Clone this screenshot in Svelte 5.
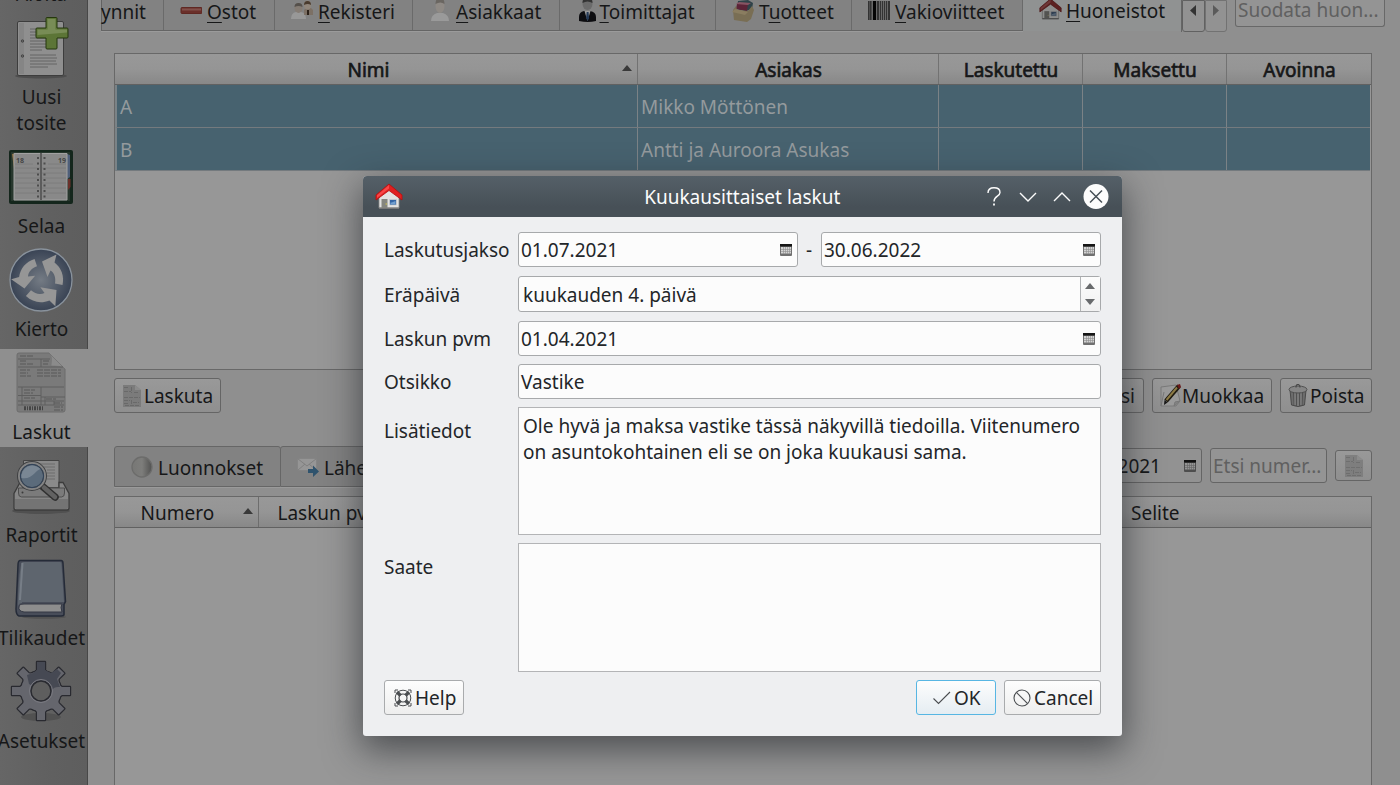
<script>
  const nav = [
    { icon: '', label: ['Aloita'] },
    { icon: 'new', label: ['Uusi', 'tosite'] },
    { icon: 'diary', label: ['Selaa'] },
    { icon: 'cycle', label: ['Kierto'] },
    { icon: 'invoice', label: ['Laskut'], active: true },
    { icon: 'report', label: ['Raportit'] },
    { icon: 'book', label: ['Tilikaudet'] },
    { icon: 'gear', label: ['Asetukset'] }
  ];
  const tabs = [
    { icon: 'minus', pre: '', key: 'O', rest: 'stot', w: 111 },
    { icon: 'people', pre: '', key: 'R', rest: 'ekisteri', w: 138 },
    { icon: 'person', pre: '', key: 'A', rest: 'siakkaat', w: 147 },
    { icon: 'suit', pre: '', key: 'T', rest: 'oimittajat', w: 156, narrow: true },
    { icon: 'box', pre: 'T', key: 'u', rest: 'otteet', w: 136 },
    { icon: 'barcode', pre: '', key: 'V', rest: 'akioviitteet', w: 171 }
  ];
  const heads = ['Nimi', 'Asiakas', 'Laskutettu', 'Maksettu', 'Avoinna'];
  const rows = [
    ['A', 'Mikko Möttönen', '', '', ''],
    ['B', 'Antti ja Auroora Asukas', '', '', '']
  ];
  const teeth = [0, 45, 90, 135, 180, 225, 270, 315];
  const bars = [[0, 1.5], [2, 1.5], [5, 3], [9, 2], [12, 1], [14, 1], [16, 1], [18, 1], [20, 3]];
</script>

{#snippet house(dim)}
  <svg class:dim width="28" height="28" viewBox="0 0 28 28">
    <path d="M4 13L14 5l10 8v12H4z" fill="#e3e3e1" stroke="#8c8c8a" stroke-width=".8" />
    <path d="M4 24.5h20v1.5H4z" fill="#777" />
    <path d="M6.5 16h6v9h-6z" fill="#85867f" /><circle cx="11.2" cy="21" r=".7" fill="#d8c94c" />
    <path d="M14.5 16.5h7V22h-7z" fill="#3465a4" stroke="#d0d0d0" stroke-width=".8" /><path d="M15.500 19.5c2 0 3-1 5-1.600v3.400h-5z" fill="#729fcf" />
    <path d="M14 1L1 12v5L14 7.500 27 17v-5z" fill="#e02020" stroke="#b80c0c" stroke-width=".8" stroke-linejoin="round" />
    <path d="M14 2L2 12.200v2.800L14 5.500z" fill="#f84848" />
  </svg>
{/snippet}

{#snippet calendar()}
  <svg class="cal" width="12" height="12" viewBox="0 0 12 12">
    <rect x="0" y="0" width="12" height="12" rx="1" fill="#707070" />
    <rect x="0" y="0" width="12" height="2.500" fill="#161616" />
    <rect x="1" y="3" width="10" height="6.500" fill="#d4d4d4" />
    <path d="M1 5.500h10M1 7.500h10M3.500 3v7M5.500 3v7M7.500 3v7M9.500 3v7" stroke="#8d8d8d" stroke-width=".6" />
  </svg>
{/snippet}

{#snippet doc()}
  <svg width="18" height="22" viewBox="0 0 18 22">
    <path d="M0 0h12l6 5v17H0z" fill="#7b7b7b" />
    <path d="M12 0v5h6z" fill="#8b8b8b" />
    <path d="M1 2.500h5M1 6.500h7M8.500 2v6M11 7.500h5M1 12.500h16M1 15.500h6M8.500 15v5M10 17.500h6M1 18.500h5M2 20.500h14" stroke="#696969" stroke-dasharray="4 1" />
  </svg>
{/snippet}

{#snippet navIcon(name)}
  <svg width="64" height="64" viewBox="0 0 64 64">
    {#if name === 'new'}
      <ellipse cx="32" cy="60" rx="26" ry="2.500" fill="#4d4d4d" />
      <rect x="8.500" y="5.500" width="46" height="54" rx="1.500" fill="#8f8f8f" stroke="#3d3d3d" />
      <path d="M10 7h5v51h-5z" fill="#858585" />
      <path d="M21 13h20M21 16h22M21 19h20M21 22h22M21 25h17M21 28h20M21 31h26M21 34h12M21 39h26M21 42h27M21 45h26M21 48h27M21 51h18" stroke="#656565" />
      <circle cx="13.500" cy="25" r="1.200" fill="#6c6c6c" stroke="#444" /><circle cx="13.500" cy="40" r="1.200" fill="#6c6c6c" stroke="#444" />
      <path d="M38 1.500h9a1 1 0 0 1 1 1V12h10a1 1 0 0 1 1 1v8a1 1 0 0 1-1 1H48v10a1 1 0 0 1-1 1h-9a1 1 0 0 1-1-1V22H28a1 1 0 0 1-1-1v-8a1 1 0 0 1 1-1h9V2.500a1 1 0 0 1 1-1z" fill="#5c7536" stroke="#25370e" />
      <path d="M38.500 3h8v10.500h11.500v3L28.500 19v-5.500h10z" fill="#8b9b6c" opacity=".6" />
    {:else if name === 'diary'}
      <rect x="0" y="5" width="64" height="54" rx="2" fill="#14261c" />
      <rect x="2" y="7" width="59" height="49" fill="#27372d" />
      <path d="M3 9l5-1v18l-3-2z" fill="#8b7145" /><path d="M58 9l3 1v22l-3 2z" fill="#4f5f79" /><path d="M59 34h2.500v8L59 45z" fill="#6b302a" />
      <path d="M5 8.500h53V55H5z" fill="#898989" stroke="#a1a1a1" />
      <path d="M6 19h18M39 19h18M6 23h51M6 28h51M6 33h51M6 38h51M6 43h51M6 48h51" stroke="#7d7d7d" />
      <path d="M32 8v47" stroke="#5c5c5c" stroke-width="2" />
      <path d="M29 12v42M35.500 12v42" stroke="#4c4c4c" stroke-width="2" stroke-dasharray="2 3.500" />
      <text x="11" y="18" text-anchor="middle" font-size="7" font-weight="700" fill="#454545">18</text>
      <text x="53" y="18" text-anchor="middle" font-size="7" font-weight="700" fill="#454545">19</text>
    {:else if name === 'cycle'}
      <circle cx="32" cy="32" r="31" fill="url(#blue)" stroke="#89929c" stroke-width="1.300" />
      <g fill="#969696">
        {#each [0, 120, 240] as a}
          <path transform="rotate({a} 32 32)" d="M33 13.500L47.500 6.500 45.500 14.500C52.500 20 55.500 28 53.500 37L46 35.500C47 30 45.500 25 41.500 22.500L38.500 29z" />
        {/each}
      </g>
    {:else if name === 'invoice'}
      <path d="M8 4q0-2 2-2h30l16 16v41q0 2-2 2H10q-2 0-2-2z" fill="#7a7a7a" stroke="#6c6c6c" />
      <path d="M40 2c4 4 2 9 2 13 5 0 10 0 14 3z" fill="#8b8b8b" stroke="#737373" stroke-width=".6" />
      <path d="M9 8h32M9 16h45M9 36h46M9 44.500h23M32 46h24M9 50h46M9 54h46M13 36v18M32 36v18M32 8v8M36 46v8M45 50v4" stroke="#5f5f5f" fill="none" />
      <path d="M11 5h13M11 10h7M11 13h13M34 10h7M34 13h5M11 19h10M11 22h8M11 25h11M28 19h24M28 22h24M28 25h24M15 39h11M15 42h9M15 47h11M37 48h10M45 52h8M45 56h9M45 59h9" stroke="#585858" stroke-dasharray="6 1" />
      <path d="M15 57.300h19" stroke="#454545" stroke-width="4" stroke-dasharray="2 1 1 1" />
    {:else if name === 'report'}
      <ellipse cx="32" cy="57" rx="29" ry="3" fill="#505050" />
      <path d="M14.500 6.500h35.500V34H14.500z" fill="#8a8a8a" stroke="#444" />
      <path d="M31 10h15M31 13h15M38 16h8M38 19h8M38 22h8M38 25h8" stroke="#6d6d6d" />
      <path d="M12 28.500h2.500M50 28.500h4l6 11v14.500q0 2-2 2H7q-2 0-2-2V39.500l6-11h3V34h36z" fill="#868686" stroke="#3c3c3c" stroke-width="1.300" />
      <path d="M6 45h53v8.500q0 1.500-2 1.500H8q-2 0-2-1.500z" fill="#747474" />
      <path d="M9.500 34v5q0 4 3 4h40q3 0 3-4v-5z" fill="#7b7b7b" stroke="#4e4e4e" />
      <circle cx="13.500" cy="38.500" r="1" fill="#3a3a3a" />
      <path d="M33 32l13 11" stroke="#303030" stroke-width="7.500" stroke-linecap="round" /><path d="M35 33.500l11 9.500" stroke="#626262" stroke-width="4.500" stroke-linecap="round" />
      <circle cx="23" cy="22" r="13" fill="#5b6b7b" stroke="#3f4042" stroke-width="4" /><circle cx="23" cy="22" r="13" fill="none" stroke="#848484" stroke-width="2" /><circle cx="23" cy="22" r="11.700" fill="none" stroke="#31445c" />
      <path d="M12.500 24a11 11 0 0 1 19-9c-5 1-8 11-19 9z" fill="#8793a0" opacity=".7" />
    {:else if name === 'book'}
      <ellipse cx="35" cy="60" rx="22" ry="1.700" fill="#525252" />
      <path d="M11 3.500h41q2 0 2 3l2.500 38-1.500 3v10q0 1.500-3 1.500H10q-3-1-3-7L9 8q0-4 2-4.500z" fill="#484d59" stroke="#252b38" stroke-width="1.500" />
      <path d="M14 5h37q1.500 0 1.500 2L55 45H13V46q-4 0-4 5 0-27 3-43 0-3 2-3z" fill="#5e656e" />
      <path d="M13.500 6L11 43" stroke="#777e87" stroke-width="2" />
      <path d="M15 47h38q-2 3 0 8H15q-6-1-5-5 0-3 5-3z" fill="#8d8d8d" stroke="#343844" />
    {:else if name === 'gear'}
      <ellipse cx="32" cy="57" rx="20" ry="4" fill="#515151" />
      <g stroke="#292a30" stroke-width="2.400" stroke-linejoin="round" fill="#65666d">
        {#each teeth as a}<path transform="rotate({a} 32 31)" d="M23 17l5-7 0-8h8l0 8 5 7z" />{/each}
        <circle cx="32" cy="31" r="20" />
      </g>
      <g fill="#65666d">
        {#each teeth as a}<path transform="rotate({a} 32 31)" d="M23 17l5-7 0-8h8l0 8 5 7z" />{/each}
        <circle cx="32" cy="31" r="20" />
      </g>
      <path d="M18 15l6-2 4-3V2h8v8l6 3 6-4 4 4-4 6 3 8c-10-1-6 7-17 5L20 24z" fill="#464953" />
      <circle cx="32" cy="31" r="10" fill="#5e5e5e" stroke="#292a30" stroke-width="1.500" />
      <circle cx="32" cy="31" r="11.500" fill="none" stroke="#7b7b82" />
    {/if}
    <defs><radialGradient id="blue"><stop offset="0" stop-color="#747b84" /><stop offset="1" stop-color="#394354" /></radialGradient></defs>
  </svg>
{/snippet}

{#snippet tabIcon(name)}
  <svg width="22" height="22" viewBox="0 0 22 22">
    {#if name === 'minus'}
      <rect x="1" y="7.500" width="21" height="6" rx="1" fill="#6a2f2a" stroke="#5f2823" /><path d="M2 8.500h19v2H2z" fill="#80504a" />
    {:else if name === 'people'}
      <path d="M0 19q0-6 5-7h5q5 1 5 7z" fill="#989898" /><ellipse cx="7.500" cy="8" rx="4" ry="5" fill="#857c74" /><path d="M3.500 7q0-4 4-4t4 4q-4-2-8 0z" fill="#55504b" />
      <path d="M13 15v-5l2-2h5l2 2v5z" fill="#7c7065" /><ellipse cx="16.500" cy="5" rx="3.500" ry="4.500" fill="#91867b" /><path d="M13 5q0-4 3.500-4T20 5q-3-2-7 0z" fill="#4a3b2e" /><path d="M16 10h2v5h-2z" fill="#2b2119" />
    {:else if name === 'person'}
      <path d="M2 21q0-6 6-8h6q6 2 6 8z" fill="#9a9a9a" /><ellipse cx="11" cy="6" rx="4.500" ry="7" fill="#8f8a85" /><path d="M6.500 4q0-6 4.500-6t4.500 6q-4-3-9 0z" fill="#6a6661" />
    {:else if name === 'suit'}
      <path d="M3 21v-4q0-5 5-6h6q6 1 6 6v4q-8 2-17 0z" fill="#0d0d10" /><path d="M8.500 11h6l-3 10z" fill="#9b9b9b" /><path d="M10.700 12h1.800l.6 6-1.500 3-1.500-3z" fill="#243956" /><ellipse cx="11.500" cy="4" rx="5" ry="6" fill="#6b6b6b" /><path d="M6.500 3q0-6 5-6t5 6q-5-3-10 0z" fill="#333" />
    {:else if name === 'box'}
      <path d="M6 1l10-1 5 3-1 6-6 2-9-2z" fill="#2e4248" /><path d="M5 4l11-1-1 8-11-2z" fill="#5c2337" /><path d="M4 4l3-2 12 1-3 2z" fill="#875463" />
      <path d="M1 10l3-4 1 4 11 1 4-5 2 4-3 9-4 3-13-2z" fill="#796e54" /><path d="M0 12l3-3 13 3-3 3z" fill="#8a7d60" />
    {:else if name === 'barcode'}
      <path d="M0 1h23v19H0z" fill="#686868" />
      {#each bars as [x, w]}<rect {x} y="1" width={w} height="19" fill={x === 5 ? '#050505' : '#333'} />{/each}
    {/if}
  </svg>
{/snippet}

<div class="app">
  <nav class="side">
    {#each nav as n}
      <div class="item" class:active={n.active}>
        {@render navIcon(n.icon)}
        {#each n.label as l}<span>{l}</span>{/each}
      </div>
    {/each}
  </nav>

  <main>
    <div class="top">
      <div class="tabs">
        <div class="tab cut"><span>ynnit</span></div>
        {#each tabs as t}
          <div class="tab" style:width="{t.w}px">
            <i class:narrow={t.narrow}>{@render tabIcon(t.icon)}</i><span>{t.pre}<u>{t.key}</u>{t.rest}</span>
          </div>
        {/each}
      </div>
      <div class="tab current"><i>{@render house(true)}</i><span><u>H</u>uoneistot</span></div>
      <div class="scroll">
        <b><svg width="8" height="12" viewBox="0 0 8 12"><path d="M7 0v11L1 5.500z" fill="#333" /></svg></b>
        <b><svg width="8" height="12" viewBox="0 0 8 12"><path d="M1 0v11l6-5.500z" fill="#5a5a5a" /></svg></b>
      </div>
      <div class="filter">Suodata huon...</div>
    </div>

    <section class="table upper">
      <div class="grid head">
        {#each heads as h, i}<div><span>{h}</span>{#if i === 0}<em></em>{/if}</div>{/each}
      </div>
      {#each rows as r}
        <div class="grid row">{#each r as c}<div>{c}</div>{/each}</div>
      {/each}
    </section>

    <div class="actions">
      <div class="btn bill">{@render doc()}Laskuta</div>
      <div class="fill"></div>
      <div class="btn add">Uusi</div>
      <div class="btn edit">
        <svg width="22" height="23" viewBox="0 0 22 23"><path d="M1 3l15-2 4 16-4 5H1z" fill="#9a9a9a" stroke="#7a7a7a" /><path d="M1 22L4 8M14 22l6-5-5 1z" stroke="#777" fill="#858585" /><path d="M19 2L6 17" stroke="#1e1a10" stroke-width="4.500" /><path d="M17 3.500L6.500 16" stroke="#8c7a45" stroke-width="2" /><path d="M17 1l3-1 1 3-2 2z" fill="#6a1818" /><path d="M4.500 16l3 2.500L4 21z" fill="#171717" /></svg>Muokkaa
      </div>
      <div class="btn del">
        <svg width="20" height="23" viewBox="0 0 20 23"><path d="M2 6h16l-1.500 15q-6.500 3-13 0z" fill="#6c6c6c" stroke="#4a4a4a" /><path d="M5.500 8l.6 13M8.500 8v14M11.500 8v14M14.500 8L14 21" stroke="#505050" /><path d="M7 8v13M10 8v14M13 8v13" stroke="#858585" /><ellipse cx="10" cy="5.500" rx="9" ry="3.500" fill="#858585" stroke="#505050" /><path d="M8 3.500q0-3 2-3t2 3" fill="none" stroke="#484848" stroke-width="1.200" /></svg>Poista
      </div>
    </div>

    <div class="mid">
      <div class="tab2 drafts"><svg width="22" height="22" viewBox="0 0 22 22"><defs><linearGradient id="ball"><stop offset="0" stop-color="#777775" /><stop offset=".5" stop-color="#7d7d7b" /><stop offset="1" stop-color="#515150" /></linearGradient></defs><circle cx="11" cy="11" r="10" fill="url(#ball)" stroke="#6c6c6b" stroke-width="1.300" /></svg>Luonnokset</div>
      <div class="tab2 sent"><svg width="22" height="22" viewBox="0 0 22 22"><path d="M.5 2.500h19v12H.5z" fill="#969696" stroke="#858585" /><path d="M.5 2.500L10 10l9.500-7.500M.5 14.500L8 8M19.500 14.500L12 8" fill="none" stroke="#7f7f7f" /><path d="M11 13h5V9.500l6 6-6 5.500v-4h-5z" fill="#2f536d" /></svg>Lähetettävät</div>
      <div class="fill"></div>
      <div class="btn date">31.12.2021{@render calendar()}</div>
      <div class="btn search">Etsi numer...</div>
      <div class="btn mini">{@render doc()}</div>
    </div>

    <section class="table lower">
      <div class="head low"><div class="num"><span>Numero</span><em></em></div><div class="pvm">Laskun pvm</div><div class="sel">Selite</div></div>
    </section>
  </main>

  <div class="dialog">
    <header>
      {@render house(false)}
      <h1>Kuukausittaiset laskut</h1>
      <svg width="124" height="26" viewBox="0 0 124 26" fill="none" stroke="#fcfcfc" stroke-width="1.400">
        <path d="M3 9q0-5.200 6-5.200T15 8.500c0 4-6 3.500-6 9" /><path d="M9 19.500v2" stroke-width="1.800" />
        <path d="M35 9l8 8 8-8M69 17l8-8 8 8" />
        <circle cx="111" cy="12.500" r="12.500" fill="#fcfcfc" stroke="none" /><path d="M105 6.500l12 12M117 6.500l-12 12" stroke="#475057" stroke-width="1.500" />
      </svg>
    </header>
    <div class="form">
      <label for="d1">Laskutusjakso</label>
      <div class="pair"><div class="field" id="d1">01.07.2021{@render calendar()}</div><span>-</span><div class="field">30.06.2022{@render calendar()}</div></div>
      <label for="d2">Eräpäivä</label>
      <div class="field spin" id="d2">kuukauden 4. päivä<div class="arrows"><em></em><em class="down"></em></div></div>
      <label for="d3">Laskun pvm</label>
      <div class="field" id="d3">01.04.2021{@render calendar()}</div>
      <label for="d4">Otsikko</label>
      <div class="field" id="d4">Vastike</div>
      <label for="d5" class="tall">Lisätiedot</label>
      <div class="area" id="d5">Ole hyvä ja maksa vastike tässä näkyvillä tiedoilla. Viitenumero<br />on asuntokohtainen eli se on joka kuukausi sama.</div>
      <label for="d6" class="tall">Saate</label>
      <div class="area last" id="d6"></div>
    </div>
    <footer>
      <div class="push help"><svg width="18" height="18" viewBox="0 0 18 18" fill="none" stroke="#4a4d50"><circle cx="9" cy="9" r="7.800" /><circle cx="9" cy="9" r="4" stroke-width="1.200" /><path d="M3 3l3.500 3.500M11.500 11.500L15 15M15 3l-3.500 3.500M6.500 11.500L3 15" stroke-width="3.300" /><path d="M1 4V1h3M14 1h3v3M17 14v3h-3M4 17H1v-3" /></svg>Help</div>
      <div class="fill"></div>
      <div class="push ok"><svg width="18" height="18" viewBox="0 0 18 18" fill="none" stroke="#4a4d50" stroke-width="1.100"><path d="M.5 9.500l5 5L17 3" /></svg>OK</div>
      <div class="push cancel"><svg width="18" height="18" viewBox="0 0 18 18" fill="none" stroke="#4a4d50" stroke-width="1.100"><circle cx="9" cy="9" r="8" /><path d="M3.400 3.400l11.200 11.200" /></svg>Cancel</div>
    </footer>
  </div>
</div>

<style>
  :global(body) { overflow: hidden; }
  * { box-sizing: border-box; }
  .app { position: relative; display: flex; width: 1400px; height: 785px; overflow: hidden; background: #8f8f8f; font: 19px/26px 'Noto Sans', sans-serif; color: #161718; }
  svg { display: block; flex: none; }
  .fill { flex: 1; }
  .side { width: 88px; flex: none; display: flex; flex-direction: column; gap: 5px; margin-top: -89px; background: linear-gradient(90deg, #666, #606060 60%, #5e5e5e); border-right: 1px solid #474747; }
  .item { width: 88px; padding: 2px 0 6px; height: 98px; flex: none; display: flex; flex-direction: column; align-items: center; margin-right: -1px; }
  .item svg { margin-right: 6px; }
  .item span { margin: 4px 5px 0 0; white-space: nowrap; }
  .item span + span { margin-top: 0; }
  .item:nth-child(2) { height: 124px; }
  .item.active { background: #8f8f8f; }
  main { flex: 1; min-width: 0; display: flex; flex-direction: column; }
  .top { display: flex; height: 53px; padding-left: 13px; flex: none; }
  .tabs { display: flex; height: 31px; background: #828282; border-bottom: 1px solid #656565; box-shadow: 0 1px #9b9b9b; }
  .tab { display: flex; padding: 0 0 0 16px; border-right: 1px solid #6a6a6a; white-space: nowrap; }
  .tab span { margin: -1px 0 0 5px; }
  .tab i { width: 22px; height: 22px; flex: none; }
  .tab i.narrow { width: 18.500px; }
  u { text-decoration: underline 1px; text-underline-offset: 3px; text-decoration-skip-ink: none; }
  .cut { width: 63px; padding: 0; border-left: 1px solid #626262; }
  .tab.cut span { margin-left: -1px; }
  .current { width: 158px; border-right: 0; background: #909292; height: 31px; }
  .current span { margin-top: -2px; }
  .current i :global(svg) { width: 23px; height: 23px; margin-top: -2px; }
  .dim { filter: saturate(.5) brightness(.62); }
  .scroll { display: flex; height: 32px; border-left: 1px solid #666; }
  .scroll b { width: 22px; border: 1px solid #727272; border-radius: 0 0 3px 3px; display: flex; justify-content: center; padding-top: 4px; background: #929292; }
  .scroll b:first-child { border-color: #616161; width: 23px; }
  .scroll b svg { margin-left: -1px; }
  .filter { width: 150px; height: 27px; margin-left: 8px; border: 1px solid #686868; border-top: 0; border-radius: 0 0 3px 3px; padding-left: 2px; line-height: 20px; color: #606060; background: #949494; }
  .table { margin: 0 28px 0 26px; border: 1px solid #686868; background: #979797; flex: none; }
  .upper { height: 317px; }
  .grid { display: grid; grid-template-columns: 523px 301px 144px 144px 1fr; }
  .head { height: 31px; border-bottom: 1px solid #616161; background: linear-gradient(#989898, #959595 50%, #888); }
  .head.grid > div { position: relative; display: flex; justify-content: center; align-items: center; border-right: 1px solid #727272; padding: 1px 15px 0 0; -webkit-text-stroke: .65px #161718; }
  .head.grid > div + div { padding: 1px 0 0 1px; }
  .head.grid > div:last-child { border: 0; }
  .head em { position: absolute; right: 5px; top: 11px; border: 5.500px solid transparent; border-top: 0; border-bottom: 6px solid #393939; }
  .row { grid-template-columns: 521px 301px 144px 144px 1fr; height: 43px; border-bottom: 1px solid #747a7e; background: #47626f; border-left: 2px solid #7b8387; margin-right: 1px; color: #949a9d; }
  .row div { padding: 9px 3px 0; border-right: 1px solid #7b8286; white-space: nowrap; }
  .row div:last-child { border-right: 0; }
  .actions { display: flex; gap: 8px; margin: 8px 28px 0 26px; height: 35px; flex: none; }
  .btn { border: 1px solid #656565; border-radius: 3px; display: flex; align-items: center; height: 35px; background: linear-gradient(#999, #8f8f8f); white-space: nowrap; }
  .bill { width: 107px; padding-left: 8px; gap: 3px; }
  .add { width: 80px; justify-content: flex-end; padding-right: 8px; }
  .edit { width: 120px; padding-left: 7px; }
  .del { width: 92px; padding-left: 7px; gap: 2px; }
  .mid { display: flex; gap: 8px; margin: 33px 28px 0 26px; height: 50px; flex: none; }
  .tab2 { display: flex; gap: 5px; padding: 2px 0 0 16px; align-items: center; height: 41px; background: #828282; border: 1px solid #666; border-radius: 3px 3px 0 0; box-shadow: 0 1px #9a9a9a; white-space: nowrap; }
  .tab2 svg { margin-top: -2px; }
  .drafts { width: 167px; }
  .sent { width: 180px; margin-left: -9px; }
  .date { width: 140px; margin-top: 2px; justify-content: flex-end; gap: 23px; padding-right: 5px; background: #929292; }
  .date :global(.cal) { filter: brightness(.7); }
  .search { width: 117px; margin-top: 2px; padding-left: 2px; color: #606060; background: #949494; }
  .mini { width: 37px; height: 31px; margin-top: 4px; justify-content: center; }
  .mini :global(svg) { opacity: .85; }
  .lower { height: 300px; }
  .low { display: flex; height: 31px; line-height: 32px; }
  .num { position: relative; width: 144px; border-right: 1px solid #6d6d6d; padding-left: 25.500px; }
  .pvm { width: 853px; padding-left: 18.500px; }
  .sel { padding-left: 19px; }

  .dialog { position: absolute; left: 363px; top: 176px; width: 759px; height: 560px; border-radius: 4px 4px 3px 3px; background: #eeeff1; box-shadow: 0 12px 36px 2px rgba(30, 34, 38, .62); display: flex; flex-direction: column; color: #232629; }
  header { display: flex; align-items: center; height: 41px; padding: 0 13px 0 12px; border-radius: 4px 4px 0 0; background: linear-gradient(#556068, #475057 75%); color: #fcfcfc; }
  h1 { flex: 1; margin: 0 0 0 96.500px; font: inherit; text-align: center; }
  .form { display: grid; grid-template-columns: 134px 583px; grid-template-rows: 44px 45px 43px 43px 136px 129px; align-items: start; padding: 15px 0 0 21px; }
  label { line-height: 36px; }
  label[for='d2'] { line-height: 38px; }
  label.tall { line-height: 26px; padding-top: 11px; }
  .pair { display: grid; grid-template-columns: 280px 23px 280px; text-align: center; align-items: center; }
  .pair span { margin-left: -1px; }
  .field { display: flex; align-items: center; justify-content: space-between; height: 35px; border: 1px solid #a7a9ab; border-radius: 3px; background: #fcfcfc; padding: 0 5px 0 2px; }
  .field.spin { height: 36px; padding: 0 0 0 4px; line-height: 28px; align-items: stretch; line-height: 36px; }
  .arrows { width: 20px; border-left: 1px solid #b1b3b5; display: flex; flex-direction: column; align-items: center; justify-content: center; gap: 10px; background: linear-gradient(#fcfcfc, #f1f1f1); }
  .arrows em { border: 5px solid transparent; border-top: 0; border-bottom: 6px solid #686a6c; margin-right: 1px; }
  .arrows .down { border-bottom: 0; border-top: 6px solid #686a6c; }
  .area { height: 128px; border: 1px solid #b3b4b6; background: #fcfcfc; padding: 5px 4px; white-space: nowrap; }
  .last { height: 129px; }
  footer { display: flex; gap: 8px; padding: 0 21px; margin-top: 8px; }
  .push { height: 35px; display: flex; align-items: center; border: 1px solid #a9abad; border-radius: 3px; background: linear-gradient(#fdfdfd, #eee); gap: 3px; }
  .help { width: 80px; padding-left: 9px; }
  .ok { width: 80px; padding-left: 16px; border-color: #57b6e3; background: linear-gradient(#fdfdfd, #e5edf2); }
  .cancel { width: 97px; padding-left: 8px; }
</style>
